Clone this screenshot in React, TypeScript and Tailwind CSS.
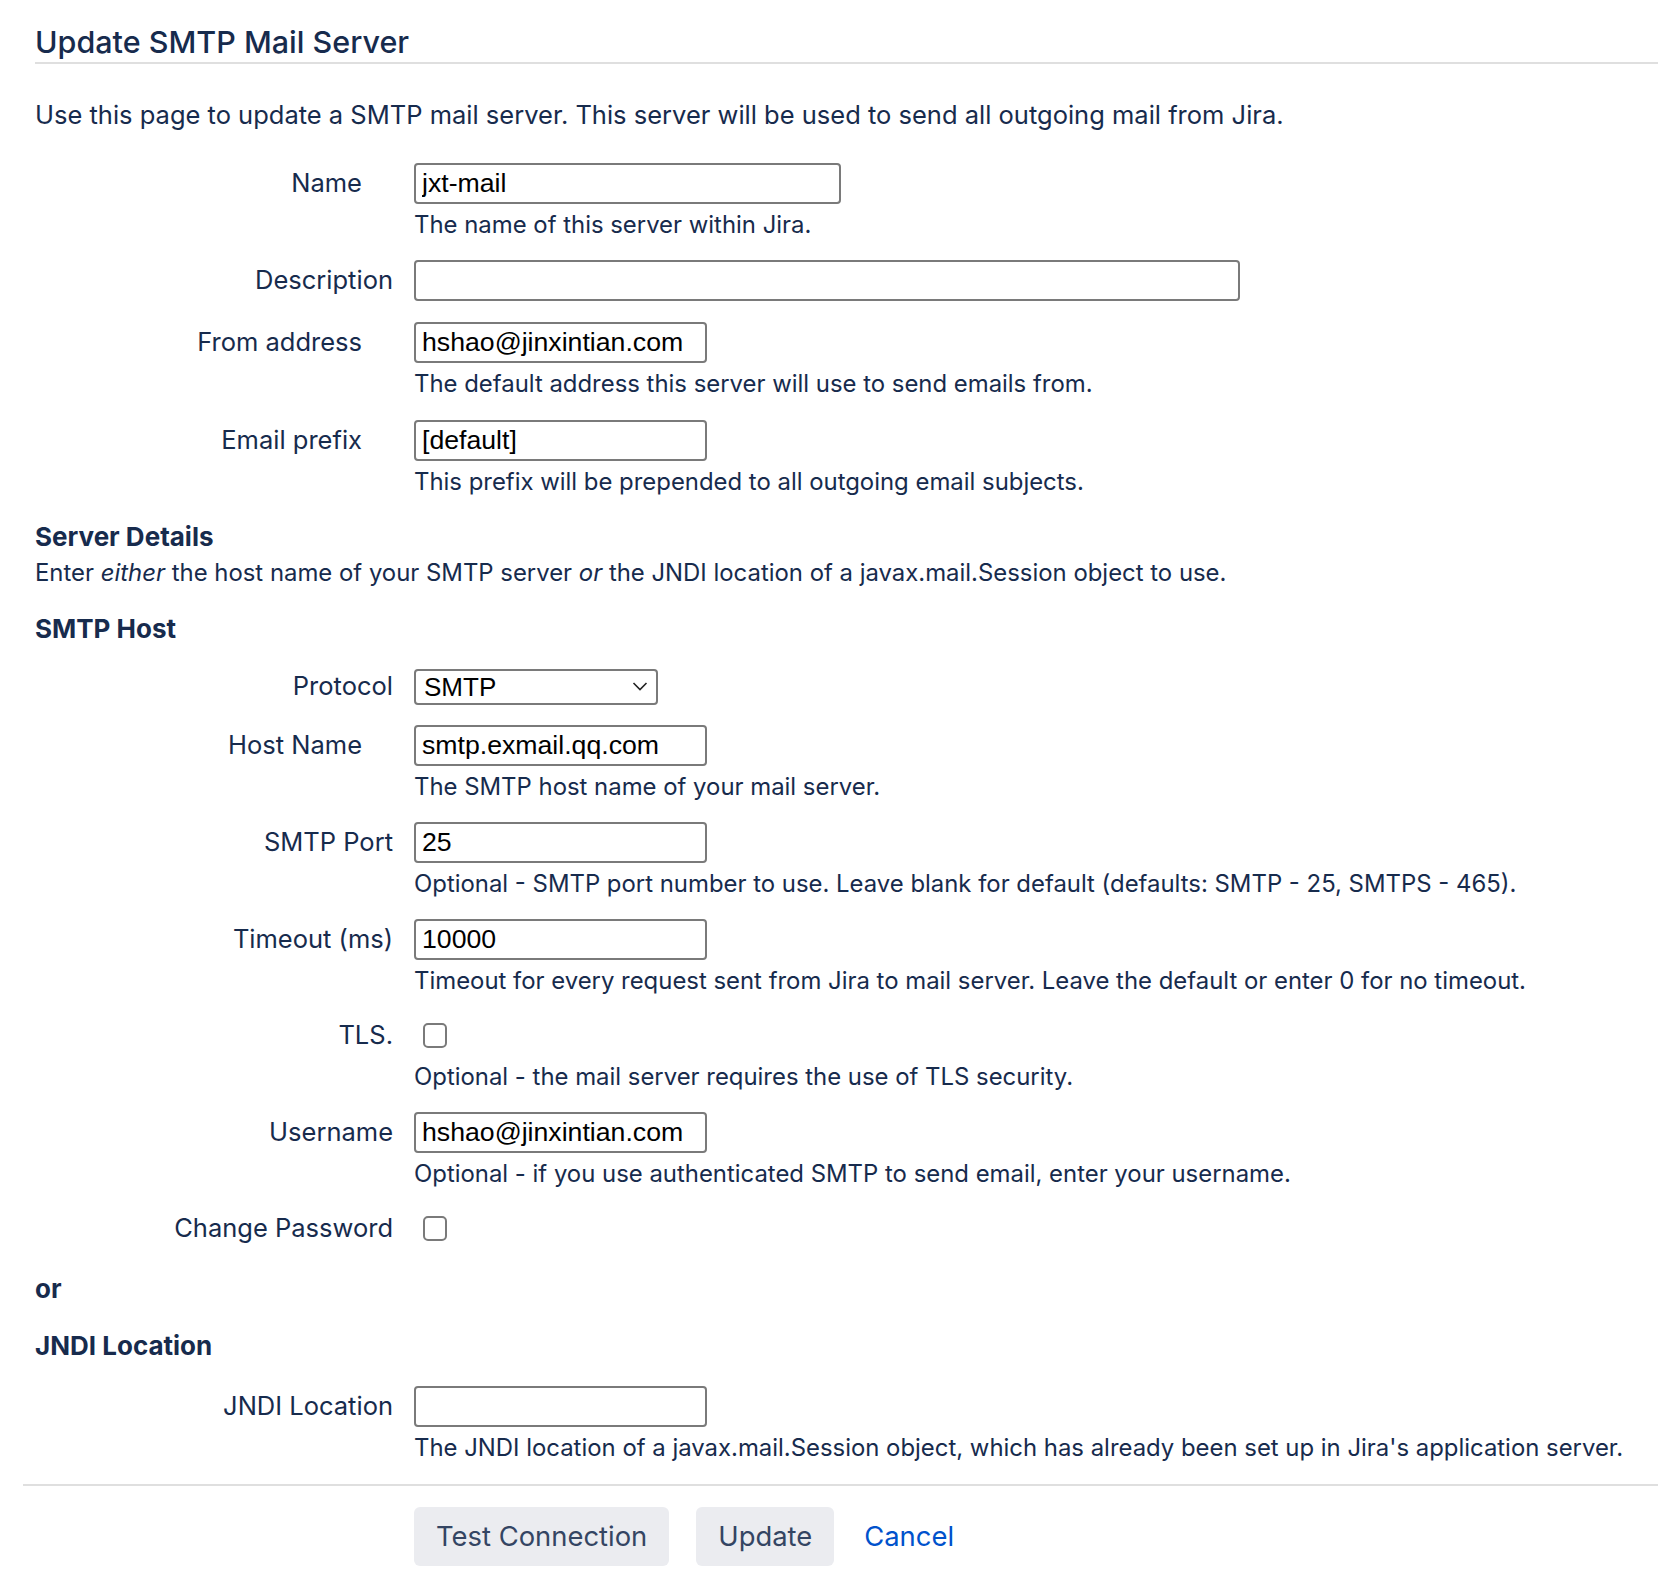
import React from 'react';
import clsx from 'clsx';

interface FieldProps {
  label: string;
  required?: boolean;
  hint?: React.ReactNode;
  rowHeight?: 'input' | 'select';
  className?: string;
  children: React.ReactNode;
}

function Field({ label, required, hint, rowHeight = 'input', className, children }: FieldProps) {
  return (
    <div className={clsx('flex', className)}>
      <label
        className={clsx(
          'w-[358px] shrink-0 text-right whitespace-nowrap',
          rowHeight === 'select' ? 'leading-[36px]' : 'leading-[40px]',
          required && 'pr-[31px]'
        )}
      >
        {label}
      </label>
      <div className="ml-[21px] flex flex-col items-start">
        {children}
        {hint && <div className="mt-[6px] text-[23.9px] leading-[29px] whitespace-nowrap">{hint}</div>}
      </div>
    </div>
  );
}

function TextInput({ value, width }: { value?: string; width: string }) {
  return (
    <input
      type="text"
      defaultValue={value}
      className={clsx(
        'h-[41px] rounded-[4px] border-2 border-[#7a7a7a] bg-white px-[6px] text-[26.67px] text-black outline-none font-["Liberation_Sans",Arial,sans-serif]',
        width
      )}
    />
  );
}

function Checkbox() {
  return (
    <div className="flex h-[41px] items-center">
      <input
        type="checkbox"
        className="ml-[9px] h-[25px] w-[24px] appearance-none rounded-[5px] border-2 border-[#7a7a7a] bg-white"
      />
    </div>
  );
}

export default function App() {
  return (
    <div className="min-h-[1586px] bg-white pl-[23px] pb-[20px] text-[25.5px] text-[#172B4D] font-['Inter',sans-serif]">
      {/* Header */}
      <div className="ml-[12px] border-b-2 border-[#dfdfdf] pt-[22px]">
        <h2 className="text-[30.5px] font-medium leading-[40px]">Update SMTP Mail Server</h2>
      </div>

      <div className="ml-[12px] flex flex-col">
        <p className="mt-[35px] leading-[32px]">
          Use this page to update a SMTP mail server. This server will be used to send all outgoing mail from Jira.
        </p>

        <Field label="Name" required className="mt-[32px]" hint="The name of this server within Jira.">
          <TextInput value="jxt-mail" width="w-[427px]" />
        </Field>

        <Field label="Description" className="mt-[21px]">
          <TextInput width="w-[826px]" />
        </Field>

        <Field
          label="From address"
          required
          className="mt-[21px]"
          hint="The default address this server will use to send emails from."
        >
          <TextInput value="hshao@jinxintian.com" width="w-[293px]" />
        </Field>

        <Field
          label="Email prefix"
          required
          className="mt-[22px]"
          hint="This prefix will be prepended to all outgoing email subjects."
        >
          <TextInput value="[default]" width="w-[293px]" />
        </Field>

        {/* Server details */}
        <h3 className="mt-[25px] text-[26px] font-bold leading-[32px]">Server Details</h3>
        <p className="mt-[4px] text-[23.9px] leading-[32px]">
          Enter <em>either</em> the host name of your SMTP server <em>or</em> the JNDI location of a javax.mail.Session
          object to use.
        </p>

        <h3 className="mt-[24px] text-[26px] font-bold leading-[32px]">SMTP Host</h3>

        <Field label="Protocol" rowHeight="select" className="mt-[23px]">
          <div className="relative">
            <select
              defaultValue="SMTP"
              className='h-[36px] w-[244px] appearance-none rounded-[4px] border-2 border-[#7a7a7a] bg-white pl-[8px] text-[26px] leading-[30px] text-black outline-none font-["Liberation_Sans",Arial,sans-serif]'
            >
              <option>SMTP</option>
              <option>SECURE_SMTP</option>
            </select>
            <svg
              className="pointer-events-none absolute right-[10px] top-[11px] h-[14px] w-[16px]"
              viewBox="0 0 16 14"
              fill="none"
              stroke="#222"
              strokeWidth="1.6"
            >
              <path d="M1.5 4 L8 10.5 L14.5 4" />
            </svg>
          </div>
        </Field>

        <Field label="Host Name" required className="mt-[19px]" hint="The SMTP host name of your mail server.">
          <TextInput value="smtp.exmail.qq.com" width="w-[293px]" />
        </Field>

        <Field
          label="SMTP Port"
          className="mt-[21px]"
          hint="Optional - SMTP port number to use. Leave blank for default (defaults: SMTP - 25, SMTPS - 465)."
        >
          <TextInput value="25" width="w-[293px]" />
        </Field>

        <Field
          label="Timeout (ms)"
          className="mt-[21px]"
          hint="Timeout for every request sent from Jira to mail server. Leave the default or enter 0 for no timeout."
        >
          <TextInput value="10000" width="w-[293px]" />
        </Field>

        <Field
          label="TLS."
          className="mt-[20px]"
          hint="Optional - the mail server requires the use of TLS security."
        >
          <Checkbox />
        </Field>

        <Field
          label="Username"
          className="mt-[21px]"
          hint="Optional - if you use authenticated SMTP to send email, enter your username."
        >
          <TextInput value="hshao@jinxintian.com" width="w-[293px]" />
        </Field>

        <Field label="Change Password" className="mt-[20px]">
          <Checkbox />
        </Field>

        <p className="mt-[24px] text-[26px] font-bold leading-[32px]">or</p>

        <h3 className="mt-[25px] text-[26px] font-bold leading-[32px]">JNDI Location</h3>

        <Field
          label="JNDI Location"
          className="mt-[24px]"
          hint="The JNDI location of a javax.mail.Session object, which has already been set up in Jira's application server."
        >
          <TextInput width="w-[293px]" />
        </Field>
      </div>

      {/* Footer buttons */}
      <div className="mt-[22px] border-t-2 border-[#dfdfdf] pt-[21px]">
        <div className="ml-[391px] flex items-center">
          <button className="h-[59px] rounded-[6px] bg-[#ebecf0] px-[22px] text-[27.4px] text-[#344563]">
            Test Connection
          </button>
          <button className="ml-[27px] h-[59px] rounded-[6px] bg-[#ebecf0] px-[22px] text-[27.4px] text-[#344563]">
            Update
          </button>
          <a href="#" className="ml-[30px] text-[27.4px] text-[#0052cc]">
            Cancel
          </a>
        </div>
      </div>
    </div>
  );
}
